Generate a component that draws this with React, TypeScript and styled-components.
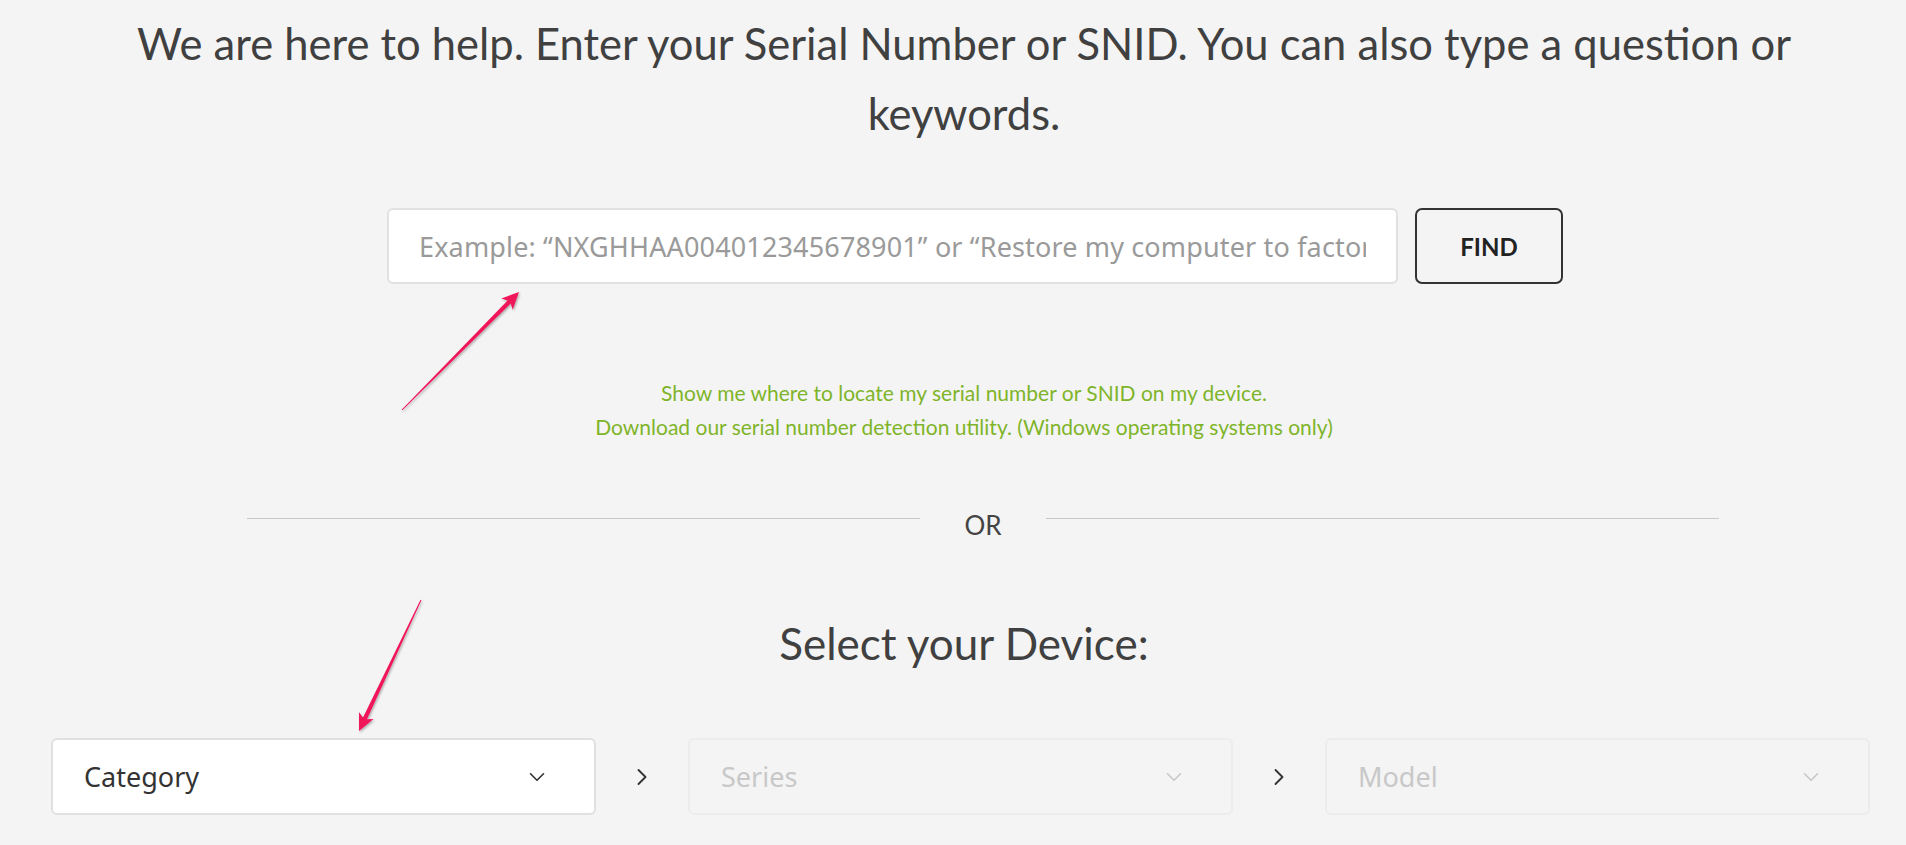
import styled, { createGlobalStyle } from 'styled-components'
import { ChevronDown, ChevronRight } from 'lucide-react'

const GlobalStyle = createGlobalStyle`
  html, body {
    margin: 0;
    background: #f4f4f4;
  }
  body {
    font-family: Lato, "Noto Sans", sans-serif;
    color: #444;
  }
  * { box-sizing: border-box; }
`

type ArrowProps = { x1: number; y1: number; x2: number; y2: number }

// tapered annotation arrow, tail (x1,y1) -> tip (x2,y2)
const Arrow = ({ x1, y1, x2, y2 }: ArrowProps) => {
  const len = Math.hypot(x2 - x1, y2 - y1)
  const dx = (x2 - x1) / len
  const dy = (y2 - y1) / len
  const nx = -dy
  const ny = dx
  const at = (t: number, w: number) =>
    `${x1 + dx * t + nx * w},${y1 + dy * t + ny * w}`
  const neck = len - 14
  const pts = [
    at(0, 0.5),
    at(neck, 2.2),
    at(neck - 3, 8),
    at(len, 0),
    at(neck - 3, -8),
    at(neck, -2.2),
    at(0, -0.5),
  ].join(' ')
  return <polygon points={pts} fill="#f0145a" />
}

const Page = () => {
  return (
    <>
      <GlobalStyle />
      <Wrap>
        <Column>
          <Headline>
            We are here to help. Enter your Serial Number or SNID. You can also type a question or keywords.
          </Headline>
          <SearchRow>
            <SearchInput
              type="text"
              placeholder="Example: “NXGHHAA004012345678901” or “Restore my computer to factory settings”"
            />
            <FindButton>FIND</FindButton>
          </SearchRow>
          <Links>
            <a>Show me where to locate my serial number or SNID on my device.</a>
            <a>Download our serial number detection utility. (Windows operating systems only)</a>
          </Links>
          <Divider>
            <Rule />
            <OrText>OR</OrText>
            <Rule />
          </Divider>
          <Title>Select your Device:</Title>
        </Column>
        <DeviceRow>
          <Select $active>
            <span>Category</span>
            <ChevronDown size={26} strokeWidth={1.5} />
          </Select>
          <Step>
            <ChevronRight size={28} strokeWidth={1.6} />
          </Step>
          <Select>
            <span>Series</span>
            <ChevronDown size={26} strokeWidth={1.5} />
          </Select>
          <Step>
            <ChevronRight size={28} strokeWidth={1.6} />
          </Step>
          <Select>
            <span>Model</span>
            <ChevronDown size={26} strokeWidth={1.5} />
          </Select>
        </DeviceRow>
        <Overlay width="1906" height="845">
          <defs>
            <filter id="sh" x="-20%" y="-20%" width="140%" height="140%">
              <feDropShadow dx="1" dy="1.5" stdDeviation="1" floodColor="#000" floodOpacity="0.3" />
            </filter>
          </defs>
          <g filter="url(#sh)">
            <Arrow x1={402} y1={410} x2={519} y2={292} />
            <Arrow x1={421} y1={600} x2={359} y2={731} />
          </g>
        </Overlay>
      </Wrap>
    </>
  )
}

const Wrap = styled.div`
  position: relative;
  height: 845px;
  overflow: hidden;
  padding-top: 8px;
`
const Column = styled.div`
  display: flex;
  flex-direction: column;
  align-items: center;
  padding-left: 22px;
`
const Headline = styled.h1`
  margin: 0;
  max-width: 1700px;
  font-size: 43.5px;
  line-height: 70px;
  font-weight: 400;
  text-align: center;
  color: #404040;
`
const SearchRow = styled.div`
  display: flex;
  gap: 17px;
  margin-top: 60px;
  padding-left: 22px;
`
const SearchInput = styled.input`
  width: 1011px;
  height: 76px;
  padding: 0 30px;
  border: 2px solid #e1e1e1;
  border-radius: 6px;
  background: #fff;
  font-family: "Noto Sans", sans-serif;
  font-size: 27px;
  letter-spacing: 0.15px;
  color: #333;
  outline: none;
  &::placeholder {
    color: #9a9a9a;
  }
`
const FindButton = styled.button`
  width: 148px;
  height: 76px;
  border: 2px solid #333;
  border-radius: 7px;
  background: transparent;
  font-family: Lato, sans-serif;
  font-weight: 700;
  font-size: 24px;
  color: #222;
`
const Links = styled.div`
  display: flex;
  flex-direction: column;
  align-items: center;
  margin-top: 92px;
  a {
    font-size: 21px;
    line-height: 34px;
    color: #7fb42a;
    cursor: pointer;
  }
`
const Divider = styled.div`
  display: flex;
  align-items: center;
  width: 1510px;
  margin-top: 66px;
  padding-left: 38px;
`
const Rule = styled.div`
  flex: 1;
  height: 1px;
  background: #c8c8c8;
  margin-bottom: 14px;
`
const OrText = styled.span`
  padding: 0 44px;
  font-size: 26px;
  line-height: 30px;
  color: #444;
`
const Title = styled.h2`
  margin: 78px 0 0;
  font-size: 44px;
  line-height: 50px;
  font-weight: 400;
  color: #404040;
`
const DeviceRow = styled.div`
  display: flex;
  align-items: center;
  margin-top: 70px;
  padding-left: 51px;
`
const Select = styled.div<{ $active?: boolean }>`
  display: flex;
  align-items: center;
  justify-content: space-between;
  width: 545px;
  height: 77px;
  padding: 0 44px 0 31px;
  border: 2px solid ${(p) => (p.$active ? '#e0e0e0' : '#ececec')};
  border-radius: 6px;
  background: ${(p) => (p.$active ? '#fff' : '#f4f4f4')};
  font-family: "Noto Sans", sans-serif;
  font-size: 27px;
  color: ${(p) => (p.$active ? '#333' : '#c8c8c8')};
  svg {
    color: ${(p) => (p.$active ? '#333' : '#c8c8c8')};
  }
`
const Step = styled.div`
  display: flex;
  justify-content: center;
  width: 92px;
  color: #333;
`
const Overlay = styled.svg`
  position: absolute;
  left: 0;
  top: 0;
  pointer-events: none;
`

export default Page
